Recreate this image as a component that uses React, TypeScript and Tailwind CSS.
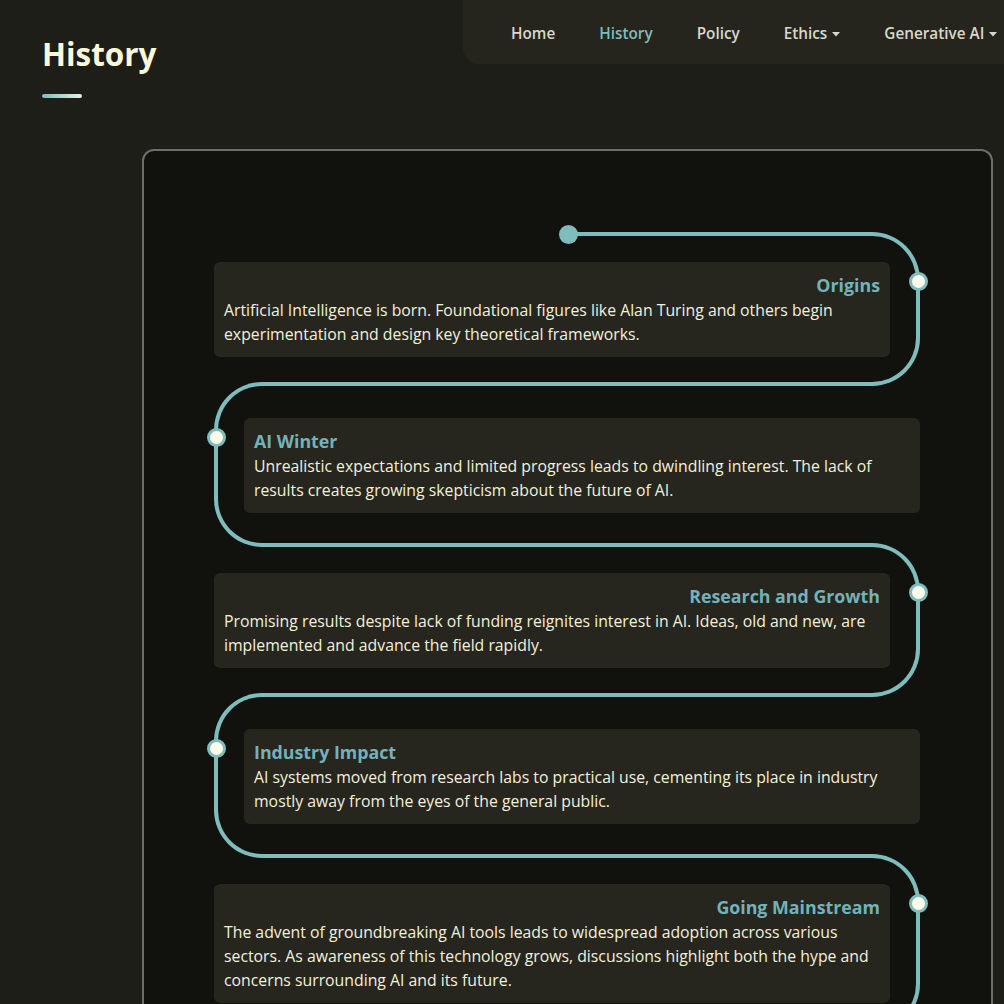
import React from 'react';

const LINE = '#7fbcbc';

interface Era { title: string; text: string; }

const ERAS: Era[] = [
  { title: 'Origins', text: 'Artificial Intelligence is born. Foundational figures like Alan Turing and others begin experimentation and design key theoretical frameworks.' },
  { title: 'AI Winter', text: 'Unrealistic expectations and limited progress leads to dwindling interest. The lack of results creates growing skepticism about the future of AI.' },
  { title: 'Research and Growth', text: 'Promising results despite lack of funding reignites interest in AI. Ideas, old and new, are implemented and advance the field rapidly.' },
  { title: 'Industry Impact', text: 'AI systems moved from research labs to practical use, cementing its place in industry mostly away from the eyes of the general public.' },
  { title: 'Going Mainstream', text: 'The advent of groundbreaking AI tools leads to widespread adoption across various sectors. As awareness of this technology grows, discussions highlight both the hype and concerns surrounding AI and its future.' },
];

function Caret() {
  return (
    <svg width="8" height="5" viewBox="0 0 8 5" className="ml-[5px] mt-[2px]">
      <polygon points="0,0 8,0 4,4.5" fill="currentColor" />
    </svg>
  );
}

function Node({ side }: { side: 'left' | 'right' }) {
  return (
    <span
      className={`absolute top-[9.5px] size-[19px] rounded-full border-[3px] border-[#7fbcbc] bg-[#fffbea] ${side === 'right' ? 'right-[-37.5px]' : 'left-[-37.5px]'}`}
    />
  );
}

function EraCard({ era, right }: { era: Era; right: boolean }) {
  return (
    <div className={`relative rounded-[6px] bg-[#26261f] px-[10px] pt-[10px] pb-[11px] ${right ? '-ml-[48px]' : '-mr-[48px]'}`}>
      <Node side={right ? 'right' : 'left'} />
      <h3 className={`text-[17.8px] leading-[26px] font-bold text-[#74b2b9] ${right ? 'text-right' : 'text-left'}`}>{era.title}</h3>
      <p className="text-[15.8px] leading-[24px] text-[#f3f0dc]">{era.text}</p>
    </div>
  );
}

export default function App() {
  return (
    <div className="min-h-screen overflow-x-hidden bg-[#1e1e18] pb-10" style={{ fontFamily: '"Open Sans", "Noto Sans", sans-serif' }}>
      <header className="flex items-start">
        <div className="pl-[42px] pt-[34px]">
          <h1 className="text-[31.4px] leading-[40px] font-bold text-[#fdf8dc]">History</h1>
          <div className="mt-[20px] h-[4px] w-[40px] rounded-full bg-gradient-to-r from-[#7fbcbc] to-[#e6f0ea]" />
        </div>
        <nav className="ml-auto flex h-16 w-[541px] shrink-0 items-center gap-11 overflow-hidden whitespace-nowrap rounded-bl-2xl bg-[#25251e] pl-[48px] pt-[2px] text-[15.3px] font-semibold text-[#d9d7c7]">
          <a>Home</a>
          <a className="text-[#7fbcbc]">History</a>
          <a>Policy</a>
          <a className="flex items-center">Ethics<Caret /></a>
          <a className="flex items-center">Generative AI<Caret /></a>
        </nav>
      </header>

      <main className="mt-[51px] ml-[142px] mr-[11px]">
        <section className="rounded-[12px] border-2 border-[#6e6e66] bg-[#11110d] pt-[81px] pb-16 pl-[70px] pr-[71px]">
          <div className="flex flex-col">
            {ERAS.map((era, i) => {
              const right = i % 2 === 0;
              return (
                <div
                  key={era.title}
                  className={
                    right
                      ? `relative ml-[48px] border-y-4 border-r-4 border-[#7fbcbc] rounded-r-[48px] pr-[26px] pt-[26px] pb-[25px] ${i > 0 ? '-mt-1' : ''}`
                      : 'relative mr-[48px] -mt-1 border-y-4 border-l-4 border-[#7fbcbc] rounded-l-[48px] pl-[26px] pt-[32px] pb-[30px]'
                  }
                >
                  {i === 0 && (
                    <>
                      <span className="absolute -top-1 left-0 h-1 w-[306px] bg-[#11110d]" />
                      <span className="absolute -top-[11.5px] left-[296.5px] size-[19px] rounded-full" style={{ background: LINE }} />
                    </>
                  )}
                  <EraCard era={era} right={right} />
                </div>
              );
            })}
          </div>
        </section>
      </main>
    </div>
  );
}
